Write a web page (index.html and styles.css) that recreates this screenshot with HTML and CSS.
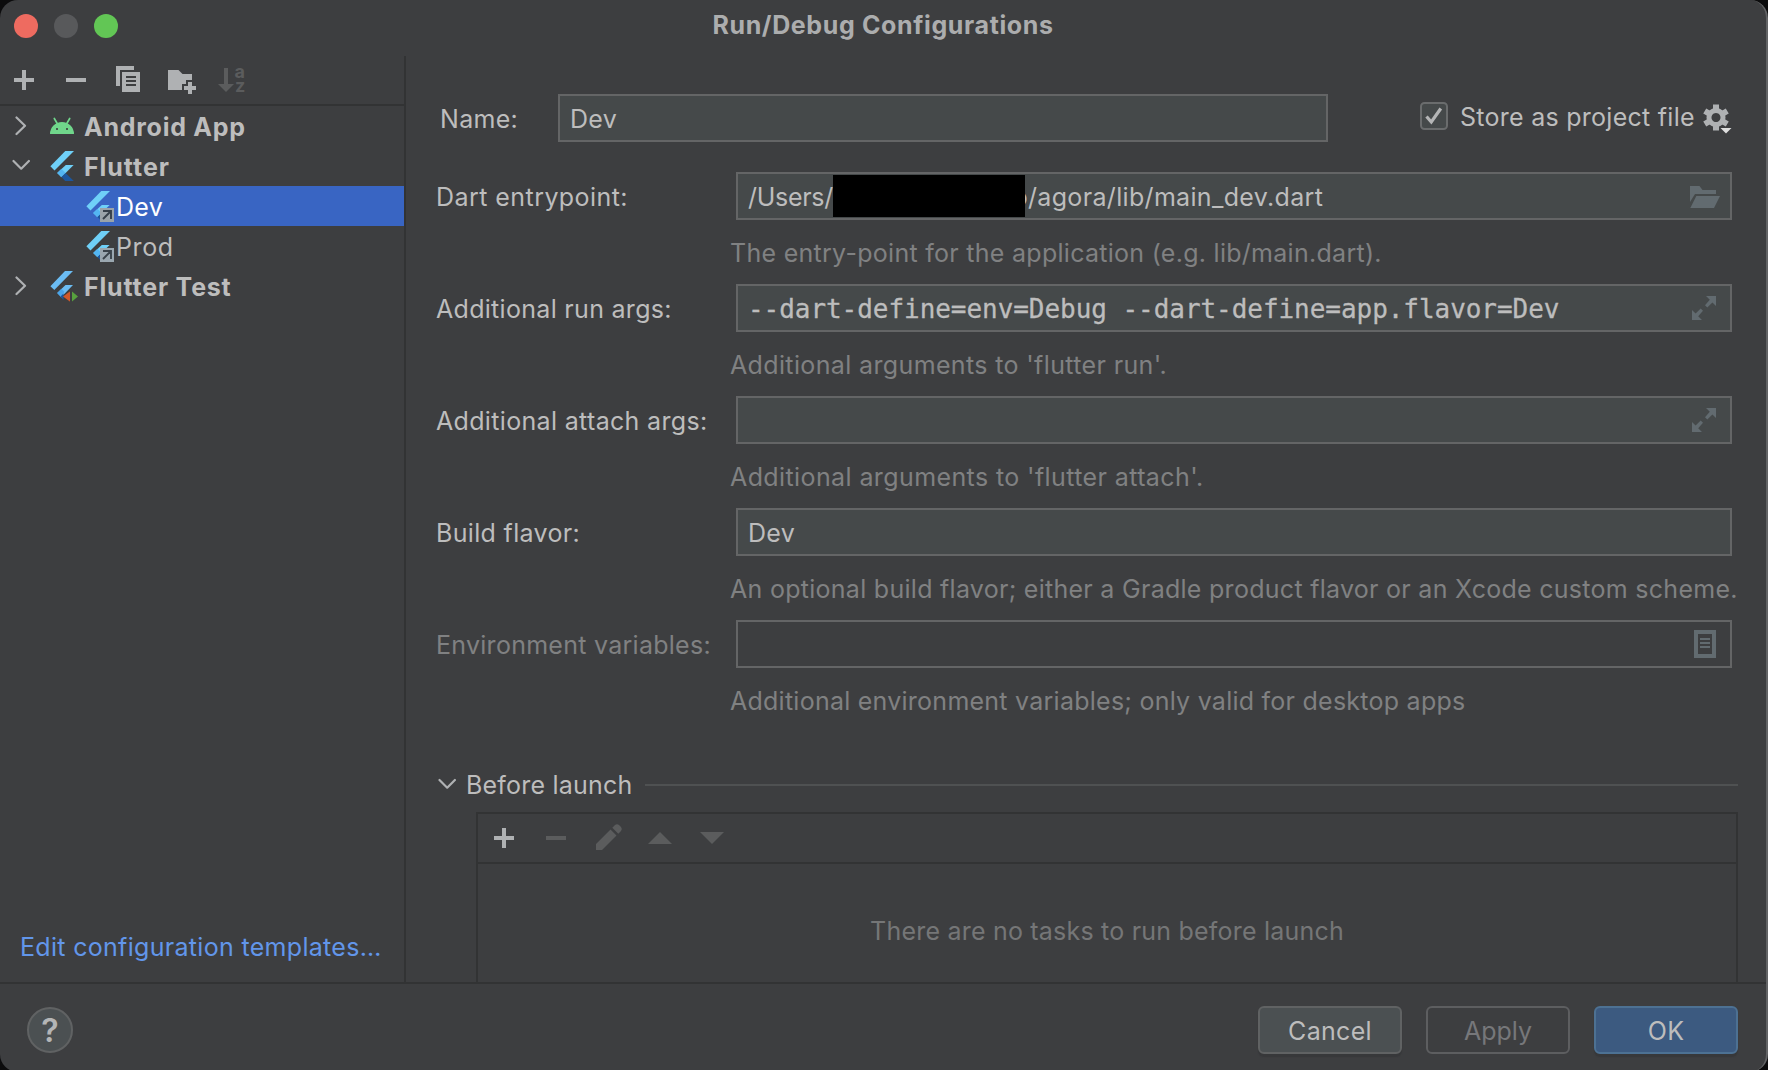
FILE: index.html
```html
<!DOCTYPE html>
<html lang="en">
<head>
<meta charset="utf-8">
<title>Run/Debug Configurations</title>
<link rel="stylesheet" href="styles.css">
</head>
<body>
<svg class="defs" width="0" height="0" aria-hidden="true">
  <symbol id="flutter" viewBox="0 0 30 32">
    <path d="M15.3 1H24L4.5 20.5.4 16.2Z" fill="#6fd0f8"/>
    <path d="M15.8 15H23.6L15.6 23 11.4 27.2 7.2 23Z" fill="#6fd0f8"/>
    <path d="M7.2 22.9l4.2-4.2 4.2 4.2-4.2 4.2Z" fill="#53b5f2"/>
    <path d="M11.4 27.1l4.2-4.2L23.8 31H15.2Z" fill="#1d569c"/>
  </symbol>
  <symbol id="plus" viewBox="0 0 52 48"><path d="M24 14h4v8h8v4h-8v8h-4v-8h-8v-4h8Z"/></symbol>
  <symbol id="minus" viewBox="0 0 52 48"><path d="M16 22h20v4H16Z"/></symbol>
  <symbol id="expand" viewBox="0 0 24 24">
    <path d="M14 0h10v10l-3.6-3.6L15.3 11.5 13 9.2l4.800-5.400ZM0 14l3.600 3.600L8.700 12.500 11 14.800 6.200 20.200 10 24H0Z"/>
  </symbol>
</svg>
<div class="window">
  <header class="titlebar">
    <div class="lights"><i class="light close"></i><i class="light mini"></i><i class="light full"></i></div>
    <h1 class="title">Run/Debug Configurations</h1>
  </header>

  <div class="content">
    <aside class="sidebar">
      <div class="toolbar side-tools">
        <svg class="tool"><use href="#plus"/></svg>
        <svg class="tool"><use href="#minus"/></svg>
        <svg class="tool" viewBox="0 0 52 48"><path d="M14 10h18v4H18v16h-4Z"/><path fill-rule="evenodd" d="M20 16h18v20H20ZM24 20v2h10v-2ZM24 24v2h10v-2ZM24 28v2h10v-2Z"/></svg>
        <svg class="tool" viewBox="0 0 52 48"><path d="M14 14h10.500l4 4H38v6h-6v4h-4v6H14Z"/><path d="M34 26h4v4h4v4h-4v4h-4v-4h-4v-4h4Z"/></svg>
        <svg class="tool off" viewBox="0 0 52 48"><path d="M18 12h4v16h6l-8 8-8-8h6Z"/><text x="28.500" y="22" class="az">a</text><text x="29" y="36" class="az">z</text></svg>
      </div>
      <div class="tree">
        <div class="node group">
          <svg class="arrow" viewBox="0 0 20 20"><path d="M4.500 1.500l8.500 8.200L4.500 18"/></svg>
          <svg class="icon" viewBox="0 0 30 32"><path d="M0 24a12 12 0 0 1 24 0Z" fill="#70d68b"/><path d="M4.300 8.500l3.200 5.500M19.700 8.500l-3.200 5.500" stroke="#70d68b" stroke-width="1.700" stroke-linecap="round"/><circle cx="7" cy="19" r="1.100" fill="#3c3d3f"/><circle cx="17" cy="19" r="1.100" fill="#3c3d3f"/></svg>
          <span class="t-android">Android App</span>
        </div>
        <div class="node group">
          <svg class="arrow" viewBox="0 0 20 20"><path d="M1.500 5l7.700 7.700 7.700-7.700"/></svg>
          <svg class="icon"><use href="#flutter"/></svg>
          <span class="t-flutter">Flutter</span>
        </div>
        <div class="node leaf selected">
          <svg class="icon" viewBox="0 0 30 32"><use href="#flutter"/><path d="M14 18h14v14H14Z" fill="#9aa3a9"/><path d="M17 21h8v8M24.500 21.500l-7.500 7.500" fill="none" stroke="#36404a" stroke-width="1.900"/></svg>
          <span>Dev</span>
        </div>
        <div class="node leaf">
          <svg class="icon" viewBox="0 0 30 32"><use href="#flutter"/><path d="M14 18h14v14H14Z" fill="#9aa7b0"/><path d="M17 21h8v8M24.500 21.500l-7.500 7.500" fill="none" stroke="#3b444c" stroke-width="1.900"/></svg>
          <span class="t-prod">Prod</span>
        </div>
        <div class="node group">
          <svg class="arrow" viewBox="0 0 20 20"><path d="M4.500 1.500l8.500 8.200L4.500 18"/></svg>
          <svg class="icon" viewBox="0 0 30 32"><path d="M15 1h8L4.300 20 .4 16.200ZM15.500 15H23L11.400 27 7.200 23Z" fill="#6bbcf3"/><path d="M7.200 22.900l4.200-4.200 3 3-3 6Z" fill="#4aa5ea"/><path d="M10.500 26.500l3-3V30Z" fill="#1d569c"/><path d="M20.500 21v11L13 26.500Z" fill="#d0582b"/><path d="M20 21h2v11h-2Z" fill="#3c3d3f"/><path d="M22 21.500l6 5-6 5Z" fill="#57a13e"/></svg>
          <span class="t-test">Flutter Test</span>
        </div>
      </div>
      <a class="templates">Edit configuration templates…</a>
    </aside>

    <main class="main">
      <div class="name-row">
        <label class="name-label">Name:</label>
        <div class="field name-field"><span>Dev</span></div>
        <div class="store">
          <svg class="check" viewBox="0 0 28 28"><rect x="1" y="1" width="26" height="26" rx="3.500" fill="#45494a" stroke="#6a6c6d" stroke-width="2"/><path d="M6.500 14.500l4.800 5.500L20.800 6.500" fill="none" stroke="#b4b5b6" stroke-width="3.200"/></svg>
          <span class="store-text">Store as project file</span>
          <svg class="gear" viewBox="0 0 30 32"><g fill="#afb1b3"><path fill-rule="evenodd" d="M13 4a9.500 9.500 0 1 0 .01 0ZM13 9a4.500 4.500 0 1 1-.01 0Z"/><g id="teeth"><path d="M10 .5h6V6h-6ZM10 21h6v5.500h-6Z"/></g><use href="#teeth" transform="rotate(60 13 13.500)"/><use href="#teeth" transform="rotate(120 13 13.500)"/></g><path d="M16 23h14.500l-7.300 7.500Z" fill="#3d3e40"/><path d="M17.500 24h11l-5.500 5.500Z" fill="#dedede"/></svg>
        </div>
      </div>

      <div class="form">
        <label class="t-dart">Dart entrypoint:</label>
        <div class="field"><span class="users">/Users/</span><i class="redacted"></i><span class="tail">o</span><span class="path">/agora/lib/main_dev.dart</span>
          <svg class="end folder" viewBox="0 0 30 22"><path d="M0 0h9.500l3 4H26v4H5L0 16Z"/><path d="M6.300 10H30l-6 12H.3Z"/></svg></div>
        <p class="hint h1">The entry-point for the application (e.g. lib/main.dart).</p>

        <label class="t-run">Additional run args:</label>
        <div class="field mono"><span>--dart-define=env=Debug --dart-define=app.flavor=Dev</span><svg class="end expand"><use href="#expand"/></svg></div>
        <p class="hint h2">Additional arguments to 'flutter run'.</p>

        <label class="t-attach">Additional attach args:</label>
        <div class="field"><svg class="end expand"><use href="#expand"/></svg></div>
        <p class="hint h3">Additional arguments to 'flutter attach'.</p>

        <label class="t-flavor">Build flavor:</label>
        <div class="field"><span>Dev</span></div>
        <p class="hint h4">An optional build flavor; either a Gradle product flavor or an Xcode custom scheme.</p>

        <label class="disabled">Environment variables:</label>
        <div class="field readonly"><svg class="end list" viewBox="0 0 22 28"><path fill-rule="evenodd" d="M0 0h22v28H0ZM4 4v20h14V4Z"/><path d="M6 8h10v2H6ZM6 12h10v2H6ZM6 16h10v2H6Z"/></svg></div>
        <p class="hint h5">Additional environment variables; only valid for desktop apps</p>
      </div>

      <div class="section">
        <svg class="arrow" viewBox="0 0 20 20"><path d="M1.500 5l7.700 7.700 7.700-7.700"/></svg>
        <span>Before launch</span>
        <i class="rule"></i>
      </div>
      <div class="tasks">
        <div class="toolbar">
          <svg class="tool"><use href="#plus"/></svg>
          <svg class="tool off"><use href="#minus"/></svg>
          <svg class="tool off" viewBox="0 0 52 48"><path d="M14 36v-6l14.500-14.500 6 6L20 36ZM30.300 13.700l2.700-2.700q2-1.700 4 0l2 2q1.700 2 0 4l-2.700 2.700Z"/></svg>
          <svg class="tool off" viewBox="0 0 52 48"><path d="M26 18l12 12H14Z"/></svg>
          <svg class="tool off" viewBox="0 0 52 48"><path d="M14 18h24L26 30Z"/></svg>
        </div>
        <p class="empty">There are no tasks to run before launch</p>
      </div>
    </main>
  </div>

  <footer class="footer">
    <button class="help">?</button>
    <button class="btn">Cancel</button>
    <button class="btn inactive">Apply</button>
    <button class="btn primary">OK</button>
  </footer>
</div>
</body>
</html>
```
FILE: styles.css
```css
* { box-sizing: border-box; margin: 0; padding: 0; }

body {
  width: 1768px;
  height: 1070px;
  overflow: hidden;
  background: #0c0c0d;
  font: 400 25px/48px Inter, "Liberation Sans", sans-serif;
  letter-spacing: 0.3px;
  color: #bdbdbd;
}

svg { display: block; flex: none; }
.defs { position: absolute; }

.window {
  display: flex;
  flex-direction: column;
  height: 1072px;
  background: #3d3e40;
  border-right: 2px solid #626365;
  border-radius: 18px;
  overflow: hidden;
}

/* Title bar */
.titlebar {
  display: grid;
  grid-template-columns: 200px 1fr 200px;
  height: 56px;
}
.lights { display: flex; gap: 16px; padding: 14px 0 0 14px; }
.light { width: 24px; height: 24px; border-radius: 50%; }
.close { background: #ee6b60; }
.mini { background: #58595b; }
.full { background: #62c655; }
.title {
  font-size: 25px;
  font-weight: 700;
  line-height: 50px;
  letter-spacing: 0.63px;
  text-align: center;
  color: #acadae;
}

.content { display: flex; height: 926px; }

/* Sidebar */
.sidebar {
  display: flex;
  flex-direction: column;
  width: 406px;
  border-right: 2px solid #323334;
}
.toolbar { display: flex; height: 50px; border-bottom: 2px solid #323334; }
.side-tools .tool:first-child { margin-left: -2px; }
.tool { width: 52px; height: 48px; fill: #afb1b3; }
.tool.off { fill: #5b5c5d; }
.az { font: 700 18px Inter, sans-serif; letter-spacing: 0; }

.tree { flex: 1; }
.node { display: flex; align-items: center; height: 40px; line-height: 38px; }
.node span { padding-top: 2px; }
.group { padding-left: 12px; font-weight: 700; }
.leaf { padding-left: 86px; }
.selected { background: #3965c3; color: #ffffff; }
.arrow { width: 20px; height: 20px; fill: none; stroke: #afb1b3; stroke-width: 2.2; stroke-linecap: round; stroke-linejoin: round; }
.icon { width: 30px; height: 32px; }
.group .icon { margin: 0 4px 0 18px; }
.t-android { letter-spacing: 0.75px; }
.t-flutter { letter-spacing: 0.95px; }
.t-test { letter-spacing: 0.8px; }
.t-prod { letter-spacing: 0.6px; }
.templates { height: 70px; padding-left: 20px; line-height: 70px; letter-spacing: 0.31px; color: #6296ea; }

/* Configuration form */
.main { flex: 1; padding: 38px 28px 0 30px; overflow: hidden; }
.name-row { display: flex; height: 78px; }
.name-label { width: 122px; padding: 1px 0 0 4px; letter-spacing: 0.3px; }
.field {
  display: flex;
  align-items: center;
  height: 48px;
  padding: 0 0 0 10px;
  background: #45494a;
  border: 2px solid #646566;
  line-height: 42px;
}
.field span { padding-top: 2px; }
.name-field { width: 770px; }
.store { display: flex; margin-left: 92px; height: 48px; line-height: 46px; }
.check { width: 28px; height: 28px; margin-top: 8px; }
.store-text { width: 255px; padding-left: 12px; white-space: nowrap; letter-spacing: 0.27px; }
.gear { width: 30px; height: 32px; margin-top: 10px; }

.form {
  display: grid;
  grid-template-columns: 300px 996px;
  grid-template-rows: repeat(5, 48px 64px);
}
.form label { padding-top: 1px; white-space: nowrap; }
.hint { grid-column: 2; margin-left: -6px; line-height: 66px; white-space: nowrap; color: #808182; }
.disabled { letter-spacing: 0.27px; color: #808182; }
.readonly { background: transparent; }
.end { margin-left: auto; fill: #626b70; }
.folder { width: 30px; height: 22px; margin-right: 10px; margin-top: 2px; }
.expand { width: 24px; height: 24px; margin-right: 14px; }
.list { width: 22px; height: 28px; margin-right: 14px; }
.mono { font-family: "DejaVu Sans Mono", monospace; font-size: 26px; letter-spacing: -0.05px; -webkit-text-stroke: 0.3px #bdbdbd; }

.users { width: 85px; letter-spacing: -0.3px; }
.redacted { width: 192px; height: 42px; background: #000000; }
.tail { display: flex; justify-content: flex-end; width: 3px; overflow: hidden; }
.path { letter-spacing: 0.33px; }

.t-dart { letter-spacing: 0.44px; }
.t-attach { letter-spacing: 0.335px; }
.t-flavor { letter-spacing: 0.33px; }
.h1 { letter-spacing: 0.28px; }
.h2 { letter-spacing: 0.363px; }
.h3 { letter-spacing: 0.397px; }
.h4 { letter-spacing: 0.28px; }
.h5 { letter-spacing: 0.25px; }

/* Before launch */
.section { display: flex; align-items: center; height: 54px; margin-top: 26px; padding-left: 2px; line-height: 54px; }
.section span { margin-left: 8px; letter-spacing: 0.22px; }
.rule { flex: 1; height: 2px; margin-left: 12px; background: #4f5152; }
.tasks { height: 190px; margin-left: 40px; border: 2px solid #323334; }
.empty { padding-top: 43px; text-align: center; letter-spacing: 0.21px; color: #757677; }

/* Footer */
.footer {
  display: flex;
  gap: 24px;
  height: 90px;
  padding: 22px 28px 0 27px;
  border-top: 2px solid #323334;
}
.btn {
  width: 144px;
  height: 48px;
  padding-top: 2px;
  background: #4b5052;
  border: 2px solid #606263;
  border-radius: 6px;
  box-shadow: 0 3px 1px #37383a;
  font: inherit;
  line-height: 42px;
  letter-spacing: 0.3px;
  color: #bdbdbd;
}
.inactive { background: transparent; border-color: #5d5e60; box-shadow: none; letter-spacing: 0; color: #76777a; }
.primary { background: #3c5a80; border-color: #4d7193; }
.help {
  width: 46px;
  height: 46px;
  margin: 1px auto 0 0;
  background: #4b5052;
  border: 2px solid #606263;
  border-radius: 50%;
  font: 600 32px/44px Inter, sans-serif;
  color: #b4b5b6;
}
```
